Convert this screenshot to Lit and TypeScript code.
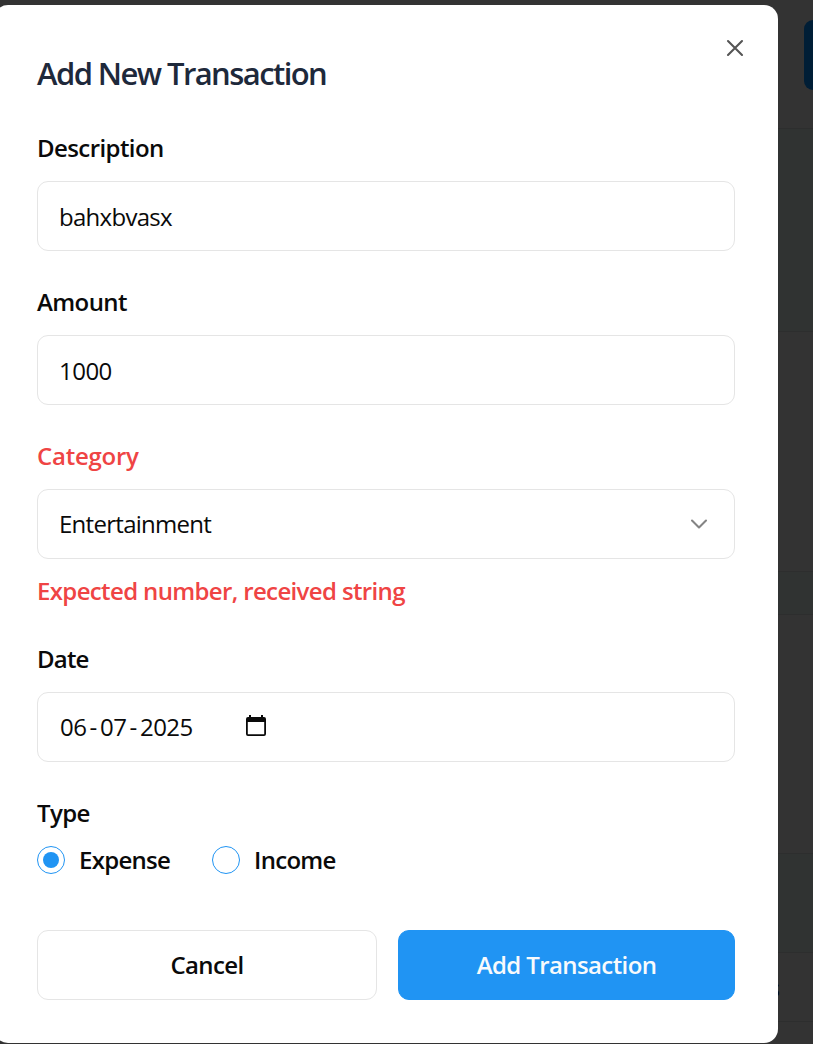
import { LitElement, html, css } from "lit";
import { customElement, state } from "lit/decorators.js";

@customElement("app-root")
export class AppRoot extends LitElement {
  static styles = css`
    :host {
      display: block;
      position: relative;
      width: 813px;
      height: 1044px;
      overflow: hidden;
      background: #333333;
      color: #0a0a0a;
      font-family: "Open Sans", "Noto Sans", sans-serif;
      font-size: 24px;
      line-height: 36px;
    }
    * { box-sizing: border-box; }
    .backdrop { display: flex; flex-direction: column; height: 100%; }
    .band { border-bottom: 1px solid #2d2e2e; flex: none; }
    .b1 { height: 129px; padding-top: 20px; display: flex; justify-content: flex-end; }
    .action { width: 9px; height: 70px; background: #001e36; border-radius: 11px 0 0 11px; }
    .tint { background: #303332; }
    .b2 { height: 203px; }
    .b3 { height: 240px; }
    .b4 { height: 43px; }
    .b5 { height: 239px; }
    .b6 { height: 99px; }
    .b7 { height: 69px; padding: 17px 33px 0 0; text-align: right; color: #020617; font-weight: 600; }
    .dialog {
      position: absolute;
      top: 5px;
      left: -6px;
      width: 784px;
      height: 1038px;
      padding: 50px 43px 43px;
      background: #fff;
      border-radius: 14px;
      display: flex;
      flex-direction: column;
    }
    .title {
      margin: 0 0 39px;
      font-size: 31px;
      line-height: 36px;
      font-weight: 600;
      letter-spacing: -1.58px;
      color: #1e293b;
    }
    .close { position: absolute; top: 33px; right: 33px; width: 20px; height: 20px; padding: 0; border: 0; background: none; }
    svg { display: block; }
    .form { display: flex; flex-direction: column; gap: 33px; }
    .field { display: flex; flex-direction: column; }
    .label { margin-bottom: 15px; font-weight: 600; letter-spacing: -0.58px; }
    .label.red { letter-spacing: -0.25px; }
    .label.short { letter-spacing: -0.8px; }
    .control {
      height: 70px;
      border: 1px solid #e5e5e5;
      border-radius: 11px;
      padding: 0 26px 0 21px;
      display: flex;
      align-items: center;
      letter-spacing: -0.72px;
    }
    .input { padding-top: 2px; }
    .numeric { letter-spacing: -0.53px; }
    .chev { margin-left: auto; }
    .error { margin-top: 14px; line-height: 35px; font-weight: 600; letter-spacing: -0.64px; }
    .red { color: #ef4444; }
    .date { display: flex; padding-left: 1px; }
    .dash { width: 13.6px; text-align: center; }
    .cal { margin-left: 53px; position: relative; top: -1px; }
    .radios { display: flex; gap: 42px; height: 28px; }
    .radio { display: flex; align-items: center; gap: 14px; font-weight: 600; letter-spacing: -0.72px; }
    .dot { width: 28px; height: 28px; border: 1px solid #2094f3; border-radius: 50%; display: grid; place-items: center; }
    .dot.on::after { content: ""; width: 16px; height: 16px; border-radius: 50%; background: #2094f3; }
    .actions { display: flex; gap: 21px; margin-top: 56px; }
    .btn {
      height: 70px;
      width: 340px;
      padding: 0;
      border: 1px solid #e5e5e5;
      border-radius: 11px;
      background: #fff;
      color: #0a0a0a;
      font: inherit;
      font-weight: 600;
      letter-spacing: -0.6px;
    }
    .primary { width: 337px; background: #2094f3; border-color: #2094f3; color: #f8fafc; }
  `;

  @state() private type = "Expense";

  render() {
    return html`
      <div class="backdrop">
        <div class="band b1"><div class="action"></div></div>
        <div class="band b2 tint"></div>
        <div class="band b3"></div>
        <div class="band b4 tint"></div>
        <div class="band b5"></div>
        <div class="band b6 tint"></div>
        <div class="band b7">s</div>
      </div>
      <section class="dialog" role="dialog">
        <button class="close" aria-label="Close">
          <svg width="20" height="20" viewBox="0 0 20 20" fill="none" stroke="#555" stroke-width="2.1" stroke-linecap="round"><path d="M3 3l14 14M17 3L3 17" /></svg>
        </button>
        <h2 class="title">Add New Transaction</h2>
        <div class="form">
          <div class="field">
            <div class="label">Description</div>
            <div class="control input">bahxbvasx</div>
          </div>
          <div class="field">
            <div class="label">Amount</div>
            <div class="control input numeric">1000</div>
          </div>
          <div class="field">
            <div class="label red">Category</div>
            <div class="control">
              <span>Entertainment</span>
              <svg class="chev" width="18" height="12" viewBox="0 0 18 12" fill="none" stroke="#848484" stroke-width="2.1" stroke-linecap="round" stroke-linejoin="round"><path d="M2 2.5l7 7 7-7" /></svg>
            </div>
            <div class="error red">Expected number, received string</div>
          </div>
          <div class="field">
            <div class="label short">Date</div>
            <div class="control numeric">
              <span class="date"><span>06</span><span class="dash">-</span><span>07</span><span class="dash">-</span><span>2025</span></span>
              <svg class="cal" width="20" height="22" viewBox="0 0 20 22"><path fill="#0a0a0a" fill-rule="evenodd" d="M3 0h2v2h10V0h2v2h1q2 0 2 2v15q0 2-2 2H2q-2 0-2-2V4q0-2 2-2h1zM1.8 7v12.2h16.4V7z" /></svg>
            </div>
          </div>
          <div class="field">
            <div class="label">Type</div>
            <div class="radios">
              ${["Expense", "Income"].map(
                (t) => html`<div class="radio" @click=${() => (this.type = t)}>
                  <span class="dot ${this.type === t ? "on" : ""}"></span><span>${t}</span>
                </div>`
              )}
            </div>
          </div>
        </div>
        <div class="actions">
          <button class="btn">Cancel</button>
          <button class="btn primary">Add Transaction</button>
        </div>
      </section>
    `;
  }
}
